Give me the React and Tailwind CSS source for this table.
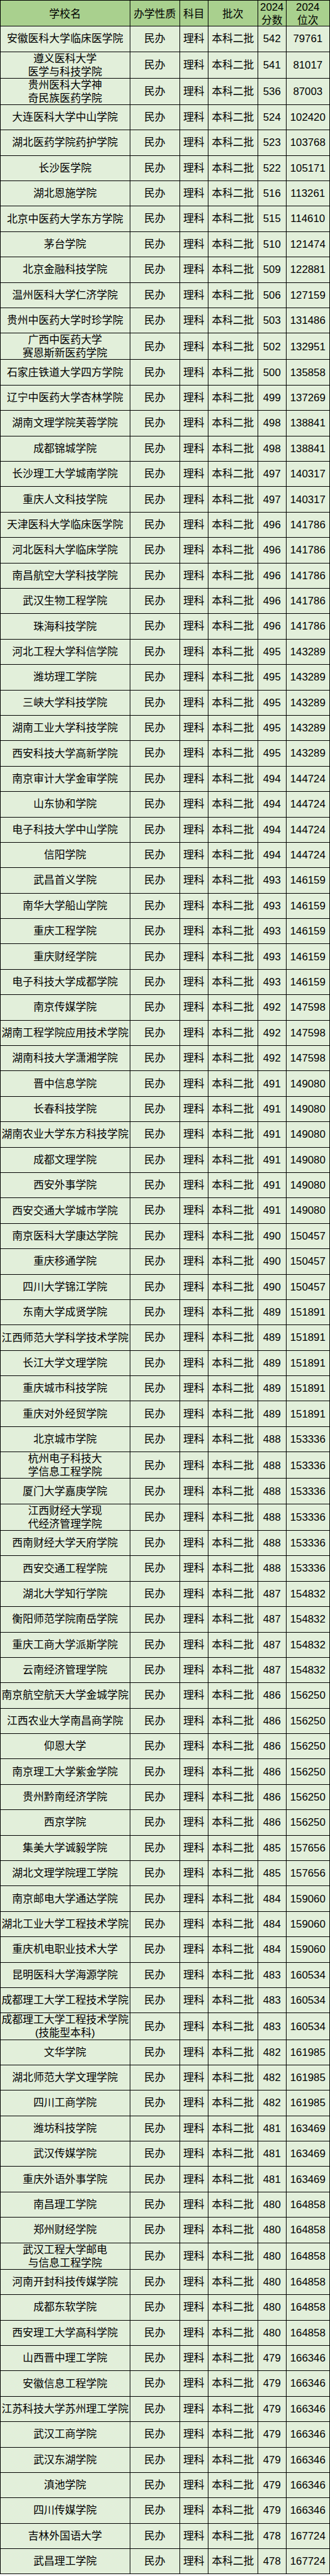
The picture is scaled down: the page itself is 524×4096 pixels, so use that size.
const rows = [
  ["安徽医科大学临床医学院", "542", "79761"],
  ["遵义医科大学\n医学与科技学院", "541", "81017"],
  ["贵州医科大学神\n奇民族医药学院", "536", "87003"],
  ["大连医科大学中山学院", "524", "102420"],
  ["湖北医药学院药护学院", "523", "103768"],
  ["长沙医学院", "522", "105171"],
  ["湖北恩施学院", "516", "113261"],
  ["北京中医药大学东方学院", "515", "114610"],
  ["茅台学院", "510", "121474"],
  ["北京金融科技学院", "509", "122881"],
  ["温州医科大学仁济学院", "506", "127159"],
  ["贵州中医药大学时珍学院", "503", "131486"],
  ["广西中医药大学\n赛恩斯新医药学院", "502", "132951"],
  ["石家庄铁道大学四方学院", "500", "135858"],
  ["辽宁中医药大学杏林学院", "499", "137269"],
  ["湖南文理学院芙蓉学院", "498", "138841"],
  ["成都锦城学院", "498", "138841"],
  ["长沙理工大学城南学院", "497", "140317"],
  ["重庆人文科技学院", "497", "140317"],
  ["天津医科大学临床医学院", "496", "141786"],
  ["河北医科大学临床学院", "496", "141786"],
  ["南昌航空大学科技学院", "496", "141786"],
  ["武汉生物工程学院", "496", "141786"],
  ["珠海科技学院", "496", "141786"],
  ["河北工程大学科信学院", "495", "143289"],
  ["潍坊理工学院", "495", "143289"],
  ["三峡大学科技学院", "495", "143289"],
  ["湖南工业大学科技学院", "495", "143289"],
  ["西安科技大学高新学院", "495", "143289"],
  ["南京审计大学金审学院", "494", "144724"],
  ["山东协和学院", "494", "144724"],
  ["电子科技大学中山学院", "494", "144724"],
  ["信阳学院", "494", "144724"],
  ["武昌首义学院", "493", "146159"],
  ["南华大学船山学院", "493", "146159"],
  ["重庆工程学院", "493", "146159"],
  ["重庆财经学院", "493", "146159"],
  ["电子科技大学成都学院", "493", "146159"],
  ["南京传媒学院", "492", "147598"],
  ["湖南工程学院应用技术学院", "492", "147598"],
  ["湖南科技大学潇湘学院", "492", "147598"],
  ["晋中信息学院", "491", "149080"],
  ["长春科技学院", "491", "149080"],
  ["湖南农业大学东方科技学院", "491", "149080"],
  ["成都文理学院", "491", "149080"],
  ["西安外事学院", "491", "149080"],
  ["西安交通大学城市学院", "491", "149080"],
  ["南京医科大学康达学院", "490", "150457"],
  ["重庆移通学院", "490", "150457"],
  ["四川大学锦江学院", "490", "150457"],
  ["东南大学成贤学院", "489", "151891"],
  ["江西师范大学科学技术学院", "489", "151891"],
  ["长江大学文理学院", "489", "151891"],
  ["重庆城市科技学院", "489", "151891"],
  ["重庆对外经贸学院", "489", "151891"],
  ["北京城市学院", "488", "153336"],
  ["杭州电子科技大\n学信息工程学院", "488", "153336"],
  ["厦门大学嘉庚学院", "488", "153336"],
  ["江西财经大学现\n代经济管理学院", "488", "153336"],
  ["西南财经大学天府学院", "488", "153336"],
  ["西安交通工程学院", "488", "153336"],
  ["湖北大学知行学院", "487", "154832"],
  ["衡阳师范学院南岳学院", "487", "154832"],
  ["重庆工商大学派斯学院", "487", "154832"],
  ["云南经济管理学院", "487", "154832"],
  ["南京航空航天大学金城学院", "486", "156250"],
  ["江西农业大学南昌商学院", "486", "156250"],
  ["仰恩大学", "486", "156250"],
  ["南京理工大学紫金学院", "486", "156250"],
  ["贵州黔南经济学院", "486", "156250"],
  ["西京学院", "486", "156250"],
  ["集美大学诚毅学院", "485", "157656"],
  ["湖北文理学院理工学院", "485", "157656"],
  ["南京邮电大学通达学院", "484", "159060"],
  ["湖北工业大学工程技术学院", "484", "159060"],
  ["重庆机电职业技术大学", "484", "159060"],
  ["昆明医科大学海源学院", "483", "160534"],
  ["成都理工大学工程技术学院", "483", "160534"],
  ["成都理工大学工程技术学院\n(技能型本科)", "483", "160534"],
  ["文华学院", "482", "161985"],
  ["湖北师范大学文理学院", "482", "161985"],
  ["四川工商学院", "482", "161985"],
  ["潍坊科技学院", "481", "163469"],
  ["武汉传媒学院", "481", "163469"],
  ["重庆外语外事学院", "481", "163469"],
  ["南昌理工学院", "480", "164858"],
  ["郑州财经学院", "480", "164858"],
  ["武汉工程大学邮电\n与信息工程学院", "480", "164858"],
  ["河南开封科技传媒学院", "480", "164858"],
  ["成都东软学院", "480", "164858"],
  ["西安理工大学高科学院", "480", "164858"],
  ["山西晋中理工学院", "479", "166346"],
  ["安徽信息工程学院", "479", "166346"],
  ["江苏科技大学苏州理工学院", "479", "166346"],
  ["武汉工商学院", "479", "166346"],
  ["武汉东湖学院", "479", "166346"],
  ["滇池学院", "479", "166346"],
  ["四川传媒学院", "479", "166346"],
  ["吉林外国语大学", "478", "167724"],
  ["武昌理工学院", "478", "167724"],
];

// column widths include each cell's right border
const cols = "grid grid-cols-[206.5px_79.5px_44.5px_79.5px_44.5px_69.5px]";
const cell = "flex items-center justify-center text-center border-r border-black whitespace-pre-line";

function Row({ name, score, rank }) {
  const tall = name.includes("\n");
  return (
    <div className={`${cols} border-b border-black bg-[#e2efda] ${tall ? "h-[42.15px]" : "h-[40.4px]"}`}>
      <div className={`${cell} border-l leading-[21px]`}>{name}</div>
      <div className={cell}>民办</div>
      <div className={cell}>理科</div>
      <div className={cell}>本科二批</div>
      <div className={cell}>{score}</div>
      <div className={cell}>{rank}</div>
    </div>
  );
}

export default function App() {
  return (
    <div className="w-[524px] bg-white text-black text-[16.8px] font-['Liberation_Sans','Noto_Sans_CJK_SC',sans-serif]">
      <div className="border-t border-black">
        <div className={`${cols} h-[41.15px] border-b border-black bg-[#a9d08e] leading-[21px]`}>
          <div className={`${cell} border-l`}>学校名</div>
          <div className={cell}>办学性质</div>
          <div className={cell}>科目</div>
          <div className={cell}>批次</div>
          <div className={cell}>2024{"\n"}分数</div>
          <div className={cell}>2024{"\n"}位次</div>
        </div>
        {rows.map(([name, score, rank], i) => (
          <Row key={i} name={name} score={score} rank={rank} />
        ))}
      </div>
    </div>
  );
}
